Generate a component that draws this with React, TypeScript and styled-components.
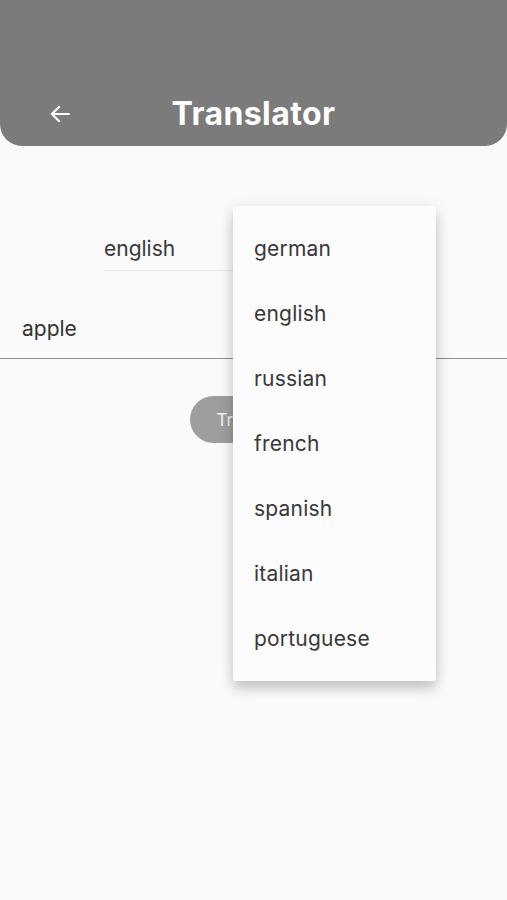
import React from 'react';
import styled, { createGlobalStyle } from 'styled-components';

const GlobalStyle = createGlobalStyle`
  html, body {
    margin: 0;
    padding: 0;
    background: #fafafa;
    font-family: Inter, "Noto Sans", sans-serif;
  }
`;

const Screen = styled.div`
  position: relative;
  width: 507px;
  height: 900px;
  background: #fafafa;
  overflow: hidden;
`;

const AppBar = styled.header`
  height: 146px;
  background: #7b7b7b;
  border-bottom-left-radius: 22px;
  border-bottom-right-radius: 22px;
  display: flex;
  align-items: flex-end;
  padding: 0 0 15px;
  box-sizing: border-box;
`;

const BackButton = styled.div`
  width: 48px;
  height: 34px;
  margin-left: 36px;
  display: flex;
  align-items: center;
  justify-content: center;
`;

const Title = styled.h1`
  flex: 1;
  margin: 0 84px 0 0;
  text-align: center;
  color: #ffffff;
  font-size: 32px;
  font-weight: 700;
  letter-spacing: 0.4px;
  line-height: 34px;
`;

const Body = styled.main`
  display: flex;
  flex-direction: column;
  padding-top: 81px;
`;

const LangRow = styled.div`
  display: flex;
  padding-left: 104px;
`;

const Dropdown = styled.div`
  width: 146px;
  height: 44px;
  border-bottom: 1.5px solid #e6e6e6;
  display: flex;
  align-items: center;
  justify-content: space-between;
  font-size: 21px;
  color: #383838;
  box-sizing: border-box;
`;

const Field = styled.div`
  margin-top: 28px;
  height: 59px;
  padding: 0 22px;
  display: flex;
  align-items: center;
  border-bottom: 1.5px solid #8f8f8f;
  font-size: 21px;
  color: #333;
`;

const TranslateButton = styled.button`
  align-self: center;
  margin-top: 37px;
  height: 47px;
  padding: 0 27px;
  border: none;
  border-radius: 24px;
  background: #9e9e9e;
  color: #f2f2f2;
  font-family: inherit;
  font-size: 17px;
`;

const Menu = styled.ul`
  position: absolute;
  left: 233px;
  top: 206px;
  width: 203px;
  margin: 0;
  padding: 10px 0;
  list-style: none;
  background: #fcfcfc;
  box-shadow: 0 8px 12px rgba(0, 0, 0, 0.16), 0 3px 18px rgba(0, 0, 0, 0.1);
  border-radius: 2px;
`;

const MenuItem = styled.li`
  height: 65px;
  padding-left: 21px;
  display: flex;
  align-items: center;
  font-size: 21px;
  color: #383838;
  letter-spacing: 0.2px;
`;

const languages = ['german', 'english', 'russian', 'french', 'spanish', 'italian', 'portuguese'];

const Caret = () => (
  <svg width="24" height="24" viewBox="0 0 24 24">
    <path d="M7 10l5 5 5-5z" fill="#757575" />
  </svg>
);

export default function App() {
  return (
    <Screen>
      <GlobalStyle />
      <AppBar>
        <BackButton>
          <svg width="26" height="26" viewBox="0 0 24 24">
            <path d="M20 12H5M11 5.5L4.5 12l6.5 6.5" stroke="#fff" strokeWidth="2" fill="none" strokeLinecap="square" />
          </svg>
        </BackButton>
        <Title>Translator</Title>
      </AppBar>
      <Body>
        <LangRow>
          <Dropdown>english<Caret /></Dropdown>
        </LangRow>
        <Field>apple</Field>
        <TranslateButton>Translate</TranslateButton>
      </Body>
      <Menu>
        {languages.map(l => (
          <MenuItem key={l}>{l}</MenuItem>
        ))}
      </Menu>
    </Screen>
  );
}
